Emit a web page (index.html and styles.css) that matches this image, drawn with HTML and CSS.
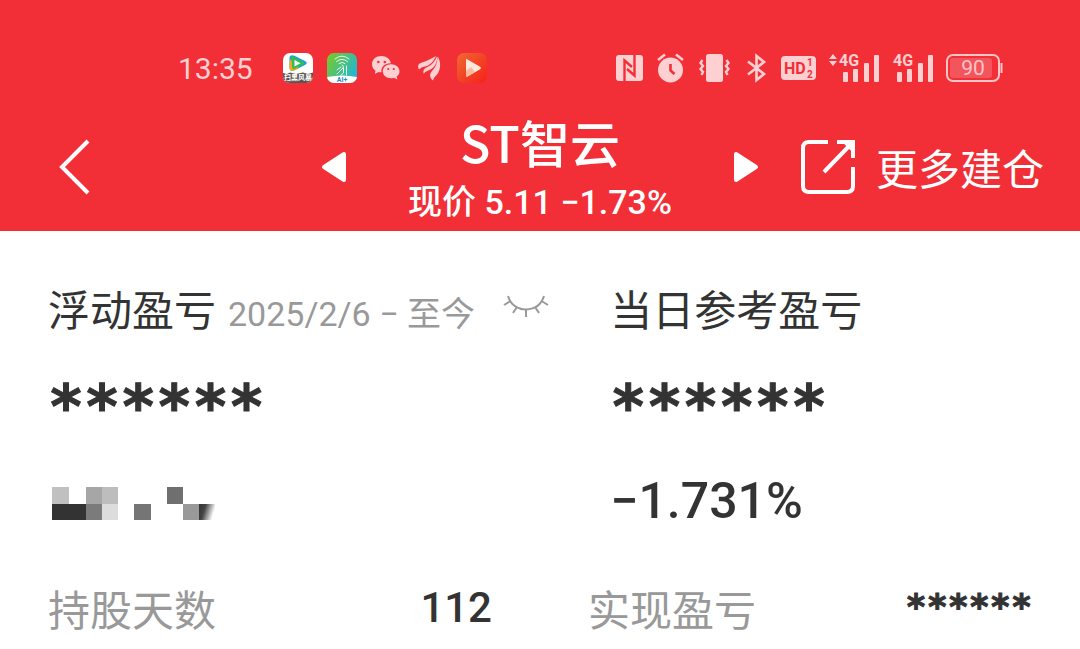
FILE: index.html
```html
<!DOCTYPE html>
<html lang="zh-CN">
<head>
    <meta charset="UTF-8">
    <meta name="viewport" content="width=device-width, initial-scale=1.0">
    <title>ST智云</title>
    <link rel="stylesheet" href="styles.css">
</head>
<body>

    <header class="header">
        <!-- 状态栏 -->
        <div class="status-bar">
            <div class="status-left">
                <span class="clock">13:35</span>
                <svg width="30" height="30" viewBox="0 0 30 30">
                    <rect width="30" height="30" rx="7" fill="#fff"/>
                    <path d="M8 2.500Q6 3 6.500 7V15Q7 19 11 17.500L22 12Q25.500 10 22 8L12 3Q9.500 1.800 8 2.500Z" fill="#1d9ce8"/>
                    <path d="M6.500 9V15Q7 19 11 17.500L16 15L8 6Z" fill="#f5a623"/>
                    <path d="M8 3Q10 3 13 5L21 9.500Q22 11 19 12L11 16Q8.500 16 9 11Z" fill="#2fbf4b"/>
                    <path d="M11.500 7V13.500L17.500 10.200Z" fill="#fff"/>
                    <path d="M0 20L4 21L7 19.500L13 21L20 19.500L25 21L30 19.500V23A7 7 0 0 1 23 30H7A7 7 0 0 1 0 23Z" fill="#5b5552"/>
                    <text x="15" y="27" class="app-caption app-caption-light">扫黑风暴</text>
                </svg>
                <svg width="30" height="30" viewBox="0 0 30 30">
                    <defs>
                        <linearGradient id="aiBg" x1="0" y1="0" x2="1" y2="0.6">
                            <stop offset="0" stop-color="#7ecb1e"/>
                            <stop offset="1" stop-color="#22b8cf"/>
                        </linearGradient>
                        <clipPath id="aiClip"><rect width="30" height="30" rx="7"/></clipPath>
                    </defs>
                    <g clip-path="url(#aiClip)">
                        <rect width="30" height="30" fill="url(#aiBg)"/>
                        <path d="M0 24Q15 21 30 24V30H0Z" fill="#fff"/>
                    </g>
                    <g fill="none" stroke="#e9fbe9" stroke-width="1" stroke-linecap="round">
                        <path d="M8 6Q15 0 22 6M9.500 8.500Q15 4 20.500 8.500M12 10.500Q15 8 18 10.500"/>
                        <path d="M15 12Q18 13 15 16L10 21M14 14L10 17M16.500 15V20L14 22M19.500 13V22"/>
                    </g>
                    <text x="15" y="29" class="app-caption app-caption-blue">AI+</text>
                </svg>
                <!-- 微信 -->
                <svg width="30" height="26" viewBox="0 0 30 26" fill="#ffd0d2">
                    <path d="M10.500 1C5 1 1 4.500 1 9.200C1 12 2.400 14.200 4.500 15.600L3.800 19L7.600 17Q9 17.400 10.500 17.300C9.500 12 14 8 20 8.200C19 4 15.300 1 10.500 1Z"/>
                    <path d="M20 9.200C15.200 9.200 11.800 12.200 11.800 16.200C11.800 20.200 15.200 23.200 20 23.200Q21.700 23.200 23 22.700L26.400 24.500L25.600 21.500C27.500 20.200 28.500 18.400 28.500 16.200C28.500 12.200 24.900 9.200 20 9.200Z"/>
                    <g fill="#f22f37">
                        <circle cx="7.400" cy="7" r="1.300"/>
                        <circle cx="13.800" cy="7" r="1.300"/>
                        <circle cx="17.300" cy="14" r="1.100"/>
                        <circle cx="22.800" cy="14" r="1.100"/>
                    </g>
                </svg>
                <svg width="28" height="26" viewBox="0 0 28 26" fill="#ffd0d2">
                    <path d="M4 14.500C2 10.500 3.500 8.500 7 7.500C12 6 16 4 21 1C19 6 15 10.500 10 11.500Q6 12 4 14.500Z"/>
                    <path d="M9 19C7.500 15.500 9 13.500 12.500 12C17 10 20 6 22 1.500C22.500 7 20 12 15.500 14.500C12.500 16 9.500 16.500 9 19Z"/>
                    <path d="M18 25.500C14 22 14.500 18.500 17.500 15.500C21 12 22.500 7 22.500 1.500C26 6 26 14 22.500 19C20 21.500 18.500 23 18 25.500Z"/>
                </svg>
                <svg width="30" height="30" viewBox="0 0 30 30">
                    <defs>
                        <linearGradient id="playBg" x1="0" y1="0" x2="1" y2="1">
                            <stop offset="0" stop-color="#ee6a30"/>
                            <stop offset="1" stop-color="#f6201a"/>
                        </linearGradient>
                    </defs>
                    <rect width="30" height="30" rx="7" fill="url(#playBg)"/>
                    <path d="M9 7Q9 5.500 10.500 6.500L23.500 14Q24.500 15 23.500 16L10.500 23.500Q9 24 9 22.500Z" fill="#ffe9df"/>
                    <path d="M9 18L14 14L18 19L10.500 23.500Q9 24 9 22.500Z" fill="#fbb9a0"/>
                </svg>
            </div>

            <div class="status-right">
                <!-- NFC -->
                <svg width="27" height="28" viewBox="0 0 27 28">
                    <rect y="1" width="27" height="26" rx="3" fill="#ffd0d2"/>
                    <path d="M8.500 27V6.500L16 13M18.500 1V21.500L11 15" fill="none" stroke="#f22f37" stroke-width="2.400"/>
                </svg>
                <svg width="29" height="30" viewBox="-1 0 29 30">
                    <circle cx="13.500" cy="17" r="12.500" fill="#ffd0d2"/>
                    <path d="M1 7L8 1.500M26 7L19 1.500" stroke="#ffd0d2" stroke-width="2.600"/>
                    <path d="M13.500 11V17.500L17.500 21" fill="none" stroke="#f22f37" stroke-width="2.600"/>
                </svg>
                <svg width="35" height="30" viewBox="-1 0 35 30">
                    <rect x="7" y="1" width="17" height="28" rx="2.500" fill="#ffd0d2"/>
                    <path d="M3.500 7L1.500 10L4 13L1.500 16L4 19L2.500 22M27.500 7L29.500 10L27 13L29.500 16L27 19L28.500 22" fill="none" stroke="#ffd0d2" stroke-width="2.400"/>
                </svg>
                <svg width="22" height="30" viewBox="-1 0 22 30">
                    <path d="M1 8.500L17 21L9.500 27V3L17 9L1 21.500" fill="none" stroke="#ffd0d2" stroke-width="2.600"/>
                </svg>
                <svg width="35" height="26" viewBox="0 0 35 26">
                    <rect y="1" width="35" height="24" rx="4" fill="#ffd0d2"/>
                    <text x="3" y="19" class="hd-text">HD</text>
                    <text x="26" y="11" class="hd-num">1</text>
                    <text x="26" y="23" class="hd-num">2</text>
                </svg>
                <svg width="51" height="30" viewBox="0 0 51 30" fill="#ffd0d2">
                    <path d="M0 6L4 1L8 6ZM0 8L4 13L8 8Z"/>
                    <text x="10" y="13" class="net-text">4G</text>
                    <rect x="14" y="19" width="5" height="10" rx="1"/>
                    <rect x="24" y="16" width="5" height="13" rx="1"/>
                    <rect x="35" y="10" width="5" height="19" rx="1"/>
                    <rect x="45" y="2" width="5" height="27" rx="1"/>
                </svg>
                <svg width="40" height="30" viewBox="0 0 40 30" fill="#ffd0d2">
                    <text x="0" y="13" class="net-text">4G</text>
                    <rect x="4" y="19" width="5" height="10" rx="1"/>
                    <rect x="14" y="16" width="5" height="13" rx="1"/>
                    <rect x="25" y="10" width="5" height="19" rx="1"/>
                    <rect x="35" y="2" width="5" height="27" rx="1"/>
                </svg>
                <svg width="57" height="28" viewBox="0 0 57 28">
                    <rect x="1" y="1" width="52" height="26" rx="6" fill="none" stroke="#ffc4c7" stroke-width="2"/>
                    <rect x="4" y="4" width="42" height="20" rx="3" fill="#f4545b"/>
                    <path d="M55.500 9V19" stroke="#ffc4c7" stroke-width="2"/>
                    <text x="27" y="21" class="battery-text">90</text>
                </svg>
            </div>
        </div>

        <!-- 导航栏 -->
        <nav class="nav-bar">
            <button type="button" class="icon-btn back-btn" aria-label="返回">
                <svg width="36" height="56" viewBox="0 0 36 56">
                    <path d="M32 2L6 28L32 54" fill="none" stroke="#fff" stroke-width="4"/>
                </svg>
            </button>

            <div class="stock-switch">
                <button type="button" class="icon-btn" aria-label="上一只">
                    <svg width="26" height="32" viewBox="0 0 26 32">
                        <path d="M23 3V29L3 16Z" fill="#fff" stroke="#fff" stroke-width="4" stroke-linejoin="round"/>
                    </svg>
                </button>
                <div class="stock">
                    <h1 class="stock-name">ST智云</h1>
                    <p class="stock-price">现价 5.11 −1.73%</p>
                </div>
                <button type="button" class="icon-btn" aria-label="下一只">
                    <svg width="26" height="32" viewBox="0 0 26 32">
                        <path d="M3 3V29L23 16Z" fill="#fff" stroke="#fff" stroke-width="4" stroke-linejoin="round"/>
                    </svg>
                </button>
            </div>

            <a href="#more" class="more-link">
                <svg width="56" height="56" viewBox="0 0 56 56" fill="none" stroke="#fff" stroke-width="4">
                    <path d="M28 3H9Q3 3 3 9V47Q3 53 9 53H47Q53 53 53 47V28"/>
                    <path d="M37 3H53V19M53 3L24 33"/>
                    <path d="M45 3H53V11Z" fill="#fff"/>
                </svg>
                <span class="more-text">更多建仓</span>
            </a>
        </nav>
    </header>

    <main class="content">
        <section class="profit">
            <div class="profit-item">
                <div class="profit-head">
                    <h2 class="profit-title">浮动盈亏</h2>
                    <span class="profit-date">2025/2/6 − 至今</span>
                    <button type="button" class="icon-btn eye-btn" aria-label="显示金额">
                        <svg width="46" height="24" viewBox="0 0 46 24" fill="none" stroke="#999" stroke-width="2">
                            <path d="M5 1Q9 14 23 14.500Q37 14 41 1"/>
                            <path d="M7.500 6L1 10M38.500 6L45 10M14 12L10 18M32 12L36 18M23 14V22"/>
                        </svg>
                    </button>
                </div>
                <p class="masked">******</p>
                <!-- 打码的收益率 -->
                <svg class="mosaic" width="163" height="33" viewBox="0 0 163 33">
                    <defs>
                        <linearGradient id="fade" x1="0" y1="0" x2="1" y2="0.3">
                            <stop offset="0" stop-color="#333"/>
                            <stop offset="0.4" stop-color="#444"/>
                            <stop offset="1" stop-color="#fff"/>
                        </linearGradient>
                    </defs>
                    <rect x="0" y="0" width="17" height="17" fill="#c0c0c0"/>
                    <rect x="34" y="0" width="16" height="17" fill="#a6a6a6"/>
                    <rect x="50" y="0" width="16" height="17" fill="#bdbdbd"/>
                    <rect x="0" y="17" width="34" height="16" fill="#333"/>
                    <rect x="34" y="17" width="16" height="16" fill="#7b7b7b"/>
                    <rect x="50" y="17" width="16" height="16" fill="#dcdcdc"/>
                    <rect x="82" y="17" width="17" height="16" fill="#757575"/>
                    <rect x="115" y="0" width="16" height="17" fill="#6f6f6f"/>
                    <rect x="131" y="17" width="16" height="16" fill="#999"/>
                    <rect x="147" y="17" width="16" height="16" fill="url(#fade)"/>
                </svg>
            </div>

            <div class="profit-item">
                <div class="profit-head">
                    <h2 class="profit-title">当日参考盈亏</h2>
                </div>
                <p class="masked">******</p>
                <p class="rate">−1.731%</p>
            </div>
        </section>

        <dl class="summary">
            <div class="summary-item">
                <dt>持股天数</dt>
                <dd>112</dd>
            </div>
            <div class="summary-item">
                <dt>实现盈亏</dt>
                <dd class="masked-small">******</dd>
            </div>
        </dl>
    </main>

</body>
</html>
```
FILE: styles.css
```css
* {
    margin: 0;
    padding: 0;
    box-sizing: border-box;
}

body {
    font-family: Roboto, "Noto Sans CJK SC", sans-serif;
    background-color: #fff;
    color: #333;
}

svg {
    display: block;
    flex-shrink: 0;
    overflow: visible;
}

.header {
    background-color: #f22f37;
    color: #fff;
    padding-top: 48px;
}

/* 状态栏 */
.status-bar {
    display: flex;
    justify-content: space-between;
    align-items: center;
    height: 40px;
    padding: 0 77px 0 178px;
    color: #ffd0d2;
}

.status-left,
.status-right {
    display: flex;
    align-items: center;
    gap: 14px;
}

.status-right {
    gap: 13px;
}

.clock {
    font-size: 30px;
    margin-right: 16px;
}

.app-caption {
    font-size: 7px;
    font-weight: bold;
    text-anchor: middle;
}

.app-caption-light {
    fill: #fff;
}

.app-caption-blue {
    fill: #1d8fc4;
}

.hd-text {
    font-size: 16px;
    font-weight: bold;
    fill: #f22f37;
}

.hd-num {
    font-size: 10px;
    font-weight: bold;
    fill: #f22f37;
}

.net-text {
    font-size: 16px;
    font-weight: bold;
}

.battery-text {
    font-size: 21px;
    text-anchor: middle;
    fill: #ffc4c7;
}

/* 导航栏 */
.nav-bar {
    display: grid;
    grid-template-columns: 1fr 438px 1fr;
    align-items: center;
    height: 143px;
    padding: 14px 36px 0;
}

.icon-btn {
    border: none;
    background: none;
    cursor: pointer;
}

.back-btn {
    justify-self: start;
    padding: 14px 20px;
}

.stock-switch {
    display: flex;
    justify-content: space-between;
    align-items: center;
}

.stock {
    text-align: center;
    white-space: nowrap;
}

.stock-name {
    font-family: "Noto Sans CJK SC", sans-serif;
    font-size: 50px;
    font-weight: 500;
    line-height: 70px;
}

.stock-price {
    font-size: 34px;
    font-weight: 500;
    line-height: 52px;
}

.more-link {
    display: flex;
    justify-content: flex-end;
    align-items: center;
    gap: 20px;
    color: #fff;
    font-size: 42px;
    line-height: 56px;
    text-decoration: none;
    white-space: nowrap;
}

.more-text {
    padding-top: 8px;
}

/* 内容 */
.content {
    padding: 44px 48px 8px;
}

.profit {
    display: grid;
    grid-template-columns: 4fr 3fr;
}

.profit-head {
    display: flex;
    align-items: center;
    height: 64px;
    white-space: nowrap;
}

.profit-title {
    font-size: 42px;
    font-weight: 400;
}

.profit-date {
    margin-left: 12px;
    padding-top: 8px;
    font-size: 34px;
    color: #999;
}

.eye-btn {
    margin-left: 28px;
}

.masked {
    font-family: "DejaVu Sans Mono", monospace;
    font-size: 60px;
    font-weight: bold;
    line-height: 64px;
    margin-top: 36px;
    -webkit-text-stroke: 1px #333;
}

.mosaic {
    margin: 48px 4px 0;
}

.rate {
    font-size: 50px;
    font-weight: 500;
    line-height: 56px;
    margin-top: 34px;
}

.summary {
    display: grid;
    grid-template-columns: 1fr 1fr;
    column-gap: 96px;
    margin-top: 46px;
}

.summary-item {
    display: flex;
    justify-content: space-between;
    align-items: center;
    height: 64px;
}

.summary-item dt {
    font-size: 42px;
    color: #999;
}

.summary-item dd {
    font-size: 42px;
    font-weight: 500;
}

.summary-item .masked-small {
    font-family: "DejaVu Sans Mono", monospace;
    font-size: 35px;
    font-weight: bold;
    -webkit-text-stroke: 1px #333;
}
```
